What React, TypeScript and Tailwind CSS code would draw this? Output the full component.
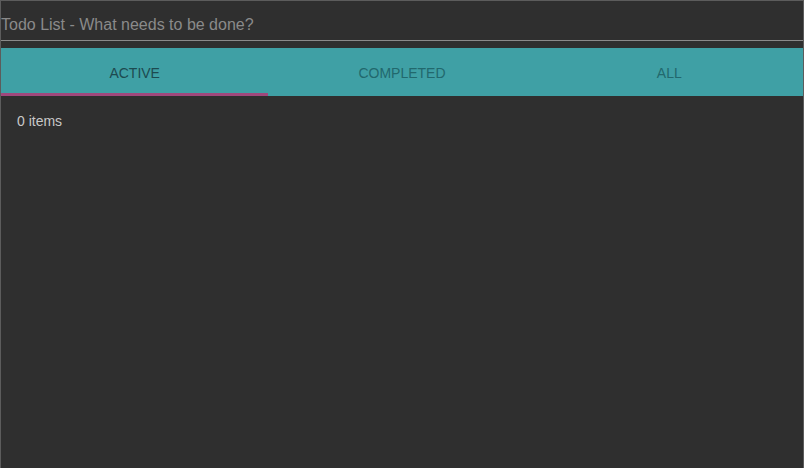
import { useState } from "react";

const tabs = ["ACTIVE", "COMPLETED", "ALL"];

export default function App() {
  const [active, setActive] = useState(0);
  const [text, setText] = useState("");

  return (
    <div
      className="h-[468px] w-[804px] overflow-hidden border-x border-t border-[#5c5c5c] bg-[#2f2f2f]"
      style={{ fontFamily: '"Liberation Sans", Arial, sans-serif' }}
    >
      {/* input */}
      <div className="h-[40px] border-b border-[#8a8a8a]">
        <input
          value={text}
          onChange={(e) => setText(e.target.value)}
          placeholder="Todo List - What needs to be done?"
          className="mt-[8px] h-[32px] w-full bg-transparent text-[16px] text-[#d0d0d0] outline-none placeholder:text-[#8a8a8a]"
        />
      </div>

      {/* tabs */}
      <div className="mt-[7px] flex h-[48px] bg-[#3fa0a5]">
        {tabs.map((t, i) => (
          <button
            key={t}
            onClick={() => setActive(i)}
            className={`flex flex-1 flex-col text-[14px] ${i === active ? "text-[#1d4a50]" : "text-[#22686d]"}`}
          >
            <span className="flex flex-1 items-center justify-center pt-[5px]">{t}</span>
            <span className={`h-[3px] w-full ${i === active ? "bg-[#a0487c]" : ""}`} />
          </button>
        ))}
      </div>

      <div className="px-[16px] pt-[15px] text-[14px] text-[#c8c8c8]">0 items</div>
    </div>
  );
}
